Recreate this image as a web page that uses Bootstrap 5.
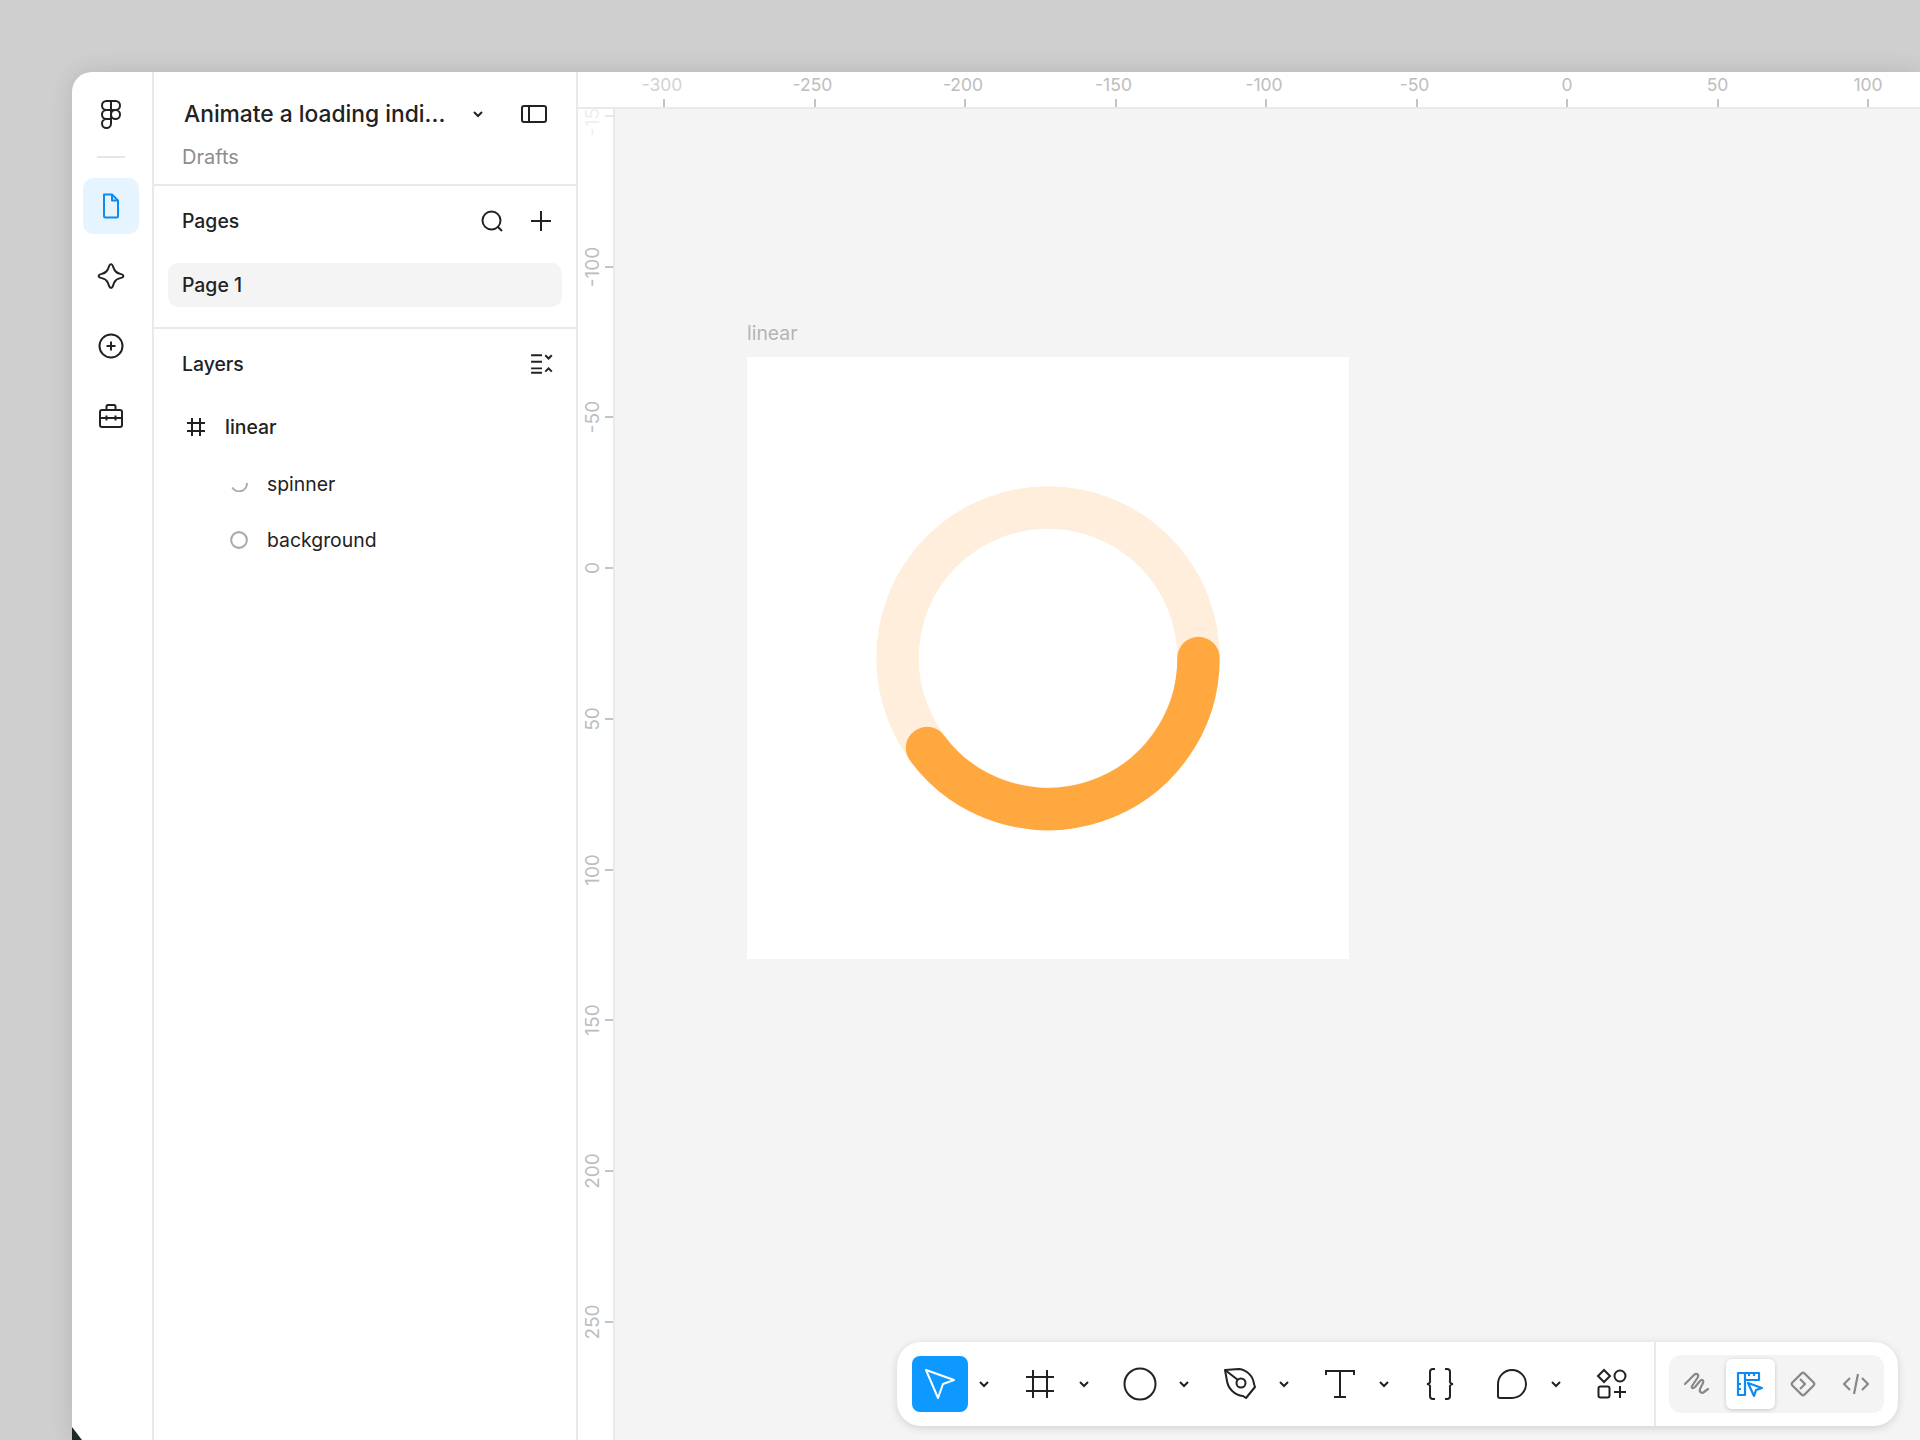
<!DOCTYPE html>
<html>
<head>
  <meta charset="utf-8">
  <title>Animate a loading indicator</title>
  <link href="https://cdn.jsdelivr.net/npm/bootstrap@5.3.0/dist/css/bootstrap.min.css" rel="stylesheet">
  <style>
    html, body { height: 1440px; overflow: hidden; }
    body { background: #cfcfcf; font-family: Inter, "Liberation Sans", sans-serif; color: #222; font-size: 19.4px; padding: 72px 0 0 72px; }
    .app-window { position: relative; width: 1848px; height: 1368px; background: #fff; border-top-left-radius: 20px; box-shadow: 0 0 24px rgba(0,0,0,.12); overflow: hidden; }
    .corner-dark { position: absolute; left: 0; bottom: 0; width: 10px; height: 13px; background: #1d2b22; clip-path: polygon(0 0, 100% 100%, 0 100%); }
    .rail { width: 82px; border-right: 2px solid #e9e9e9; padding: 22px 3px 0 0; }
    .rail-logo { height: 40px; }
    .rail-rule { width: 28px; height: 2px; background: #e6e6e6; margin: 22px 0 20px; }
    .rail-btn { width: 56px; height: 56px; border-radius: 10px; margin-bottom: 14px; }
    .rail-btn.on { background: #e5f4ff; }
    .side { width: 424px; border-right: 2px solid #e9e9e9; }
    .side-head { height: 114px; border-bottom: 2px solid #e9e9e9; padding: 22px 29px 0 28px; }
    .doc-title { font-size: 22.8px; font-weight: 500; line-height: 40px; width: 275px; margin-left: 2px; white-space: nowrap; }
    .doc-sub { color: #8d8d8d; font-size: 20px; line-height: 24px; margin-top: 11px; }
    .sec-title { font-weight: 500; padding: 0 24px 0 28px; height: 30px; }
    .sec-title span { margin-top: 2px; }
    .pages { height: 143px; border-bottom: 2px solid #e9e9e9; padding-top: 20px; }
    .page-row { margin: 27px 14px 0; height: 44px; background: #f4f4f4; border-radius: 10px; font-weight: 500; padding-left: 14px; line-height: 44px; }
    .layers { padding-top: 20px; }
    .layer-row { height: 56.3px; }
    .layer-row span { line-height: 1; margin-top: 2px; }
    .ly-top { padding-left: 33px; margin-top: 20px; font-weight: 500; gap: 20px; }
    .ly-sub { padding-left: 76px; gap: 19px; }
    .canvas { background: #f4f4f4; }
    .ruler-h { position: absolute; left: 506px; top: 0; right: 0; height: 37px; background: #fff; border-bottom: 2px solid #e9e9e9; }
    .ruler-v { position: absolute; left: 506px; top: 0; bottom: 0; width: 37px; background: #fff; border-right: 2px solid #e9e9e9; overflow: hidden; }
    .tick-h { position: absolute; top: 0; width: 2px; height: 35px; }
    .tick-h i { position: absolute; left: 0; bottom: 0; width: 2px; height: 8px; background: #c4c4c4; }
    .tick-h b { position: absolute; top: 3px; left: 1px; transform: translateX(-50%); font-weight: 400; font-size: 17.5px; line-height: 20px; color: #bdbdbd; white-space: nowrap; }
    .tick-h.neg b { left: -1px; }
    .tick-h.faded b { color: #d2d2d2; }
    .tick-v { position: absolute; left: 0; width: 35px; height: 2px; }
    .tick-v i { position: absolute; right: 0; top: 0; height: 2px; width: 8px; background: #c4c4c4; }
    .tick-v b { position: absolute; left: 15px; top: 1px; transform: translate(-50%,-50%) rotate(-90deg); font-weight: 400; font-size: 19px; line-height: 20px; color: #bdbdbd; white-space: nowrap; }
    .tick-v.faded b { color: #efefef; }
    .tick-v.faded i { background: #e8e8e8; }
    .frame-label { position: absolute; left: 675px; top: 249px; line-height: 24px; color: #b5b5b5; }
    .frame-box { position: absolute; left: 675px; top: 285px; width: 602px; height: 602px; background: #fff; }
    .toolbar { position: absolute; left: 825px; top: 1270px; width: 1001px; height: 84px; background: #fff; border-radius: 24px; box-shadow: 0 2px 8px rgba(0,0,0,.14); padding-left: 15px; }
    .tool { width: 56px; height: 56px; border-radius: 8px; }
    .tool.on { background: #0d99ff; }
    .tool-caret { width: 24px; height: 56px; margin-right: 20px; padding-left: 8px; }
    .mode-wrap { position: absolute; left: 757px; top: 0; bottom: 0; border-left: 2px solid #eaeaea; padding: 13px 0 0 13px; }
    .mode-group { width: 215px; height: 58px; background: #f4f4f4; border-radius: 12px; padding: 4px 0 0 4px; }
    .mode-btn { width: 49px; height: 50px; border-radius: 6px; margin-right: 4px; }
    .mode-btn.on { background: #fff; box-shadow: 0 1px 4px rgba(0,0,0,.18); }
  </style>
</head>
<body>
  <div class="app-window d-flex">
    <div class="rail d-flex flex-column align-items-center flex-shrink-0">
      <div class="rail-logo d-flex align-items-center justify-content-center">
        <svg width="22" height="30" viewBox="0 0 22 30" fill="none" stroke="#222" stroke-width="2"><path d="M11 2H6.5a4.500 4.500 0 0 0 0 9H11zM11 2h4.500a4.500 4.500 0 0 1 0 9H11zM11 11H6.500a4.500 4.500 0 0 0 0 9H11zM11 15.500a4.500 4.500 0 1 0 9 0a4.500 4.500 0 1 0-9 0zM11 20H6.500a4.500 4.500 0 1 0 4.500 4.500z"/></svg>
      </div>
      <div class="rail-rule"></div>
      <div class="rail-btn on d-flex align-items-center justify-content-center">
        <svg width="18" height="26" viewBox="0 0 18 26" fill="none" stroke="#0d8bf0" stroke-width="2" stroke-linejoin="round"><path d="M2 1.500h8l6 6v15.500a1.500 1.500 0 0 1-1.500 1.500h-11a1.500 1.500 0 0 1-1.500-1.500z"/><path d="M10 1.500v6h6"/></svg>
      </div>
      <div class="rail-btn d-flex align-items-center justify-content-center">
        <svg width="28" height="28" viewBox="0 0 26 26" fill="none" stroke="#222" stroke-width="1.800" stroke-linejoin="round"><path d="M13 2c1.800 0 2 3 3 5s3 3.500 5.500 4c2.500.5 3 1 3 2s-.5 1.500-3 2s-4.500 2-5.500 4s-1.200 5-3 5s-2-3-3-5s-3-3.500-5.500-4s-3-1-3-2s.5-1.500 3-2s4.500-2 5.500-4s1.200-5 3-5z"/></svg>
      </div>
      <div class="rail-btn d-flex align-items-center justify-content-center">
        <svg width="26" height="26" viewBox="0 0 26 26" fill="none" stroke="#222" stroke-width="2"><circle cx="13" cy="13" r="11.500"/><path d="M13 8.500v9M8.500 13h9"/></svg>
      </div>
      <div class="rail-btn d-flex align-items-center justify-content-center">
        <svg width="26" height="26" viewBox="0 0 26 26" fill="none" stroke="#222" stroke-width="2" stroke-linejoin="round"><rect x="2" y="7" width="22" height="17" rx="2"/><path d="M8.500 7V3.500a1.500 1.500 0 0 1 1.500-1.500h6a1.500 1.500 0 0 1 1.500 1.500V7M2 15h22M8.500 12.500v5M17.500 12.500v5"/></svg>
      </div>
    </div>

    <div class="side flex-shrink-0">
      <div class="side-head">
        <div class="d-flex align-items-center">
          <div class="doc-title">Animate a loading indi...</div>
          <svg style="margin-left:13px" width="12" height="8" viewBox="0 0 12 8" fill="none" stroke="#222" stroke-width="2"><path d="M2 2l4 4 4-4"/></svg>
          <svg class="ms-auto" width="26" height="18" viewBox="0 0 26 18" fill="none" stroke="#222" stroke-width="2"><rect x="1" y="1" width="24" height="16" rx="2"/><path d="M8 1v16"/></svg>
        </div>
        <div class="doc-sub">Drafts</div>
      </div>
      <div class="pages">
        <div class="sec-title d-flex align-items-center">
          <span>Pages</span>
          <svg class="ms-auto" width="24" height="24" viewBox="0 0 24 24" fill="none" stroke="#222" stroke-width="2"><circle cx="11.500" cy="11.500" r="9"/><path d="M18 18l4 4"/></svg>
          <svg style="margin-left:26px" width="22" height="22" viewBox="0 0 22 22" fill="none" stroke="#222" stroke-width="2"><path d="M11 1v20M1 11h20"/></svg>
        </div>
        <div class="page-row">Page 1</div>
      </div>
      <div class="layers">
        <div class="sec-title d-flex align-items-center">
          <span>Layers</span>
          <svg class="ms-auto" style="margin-right:-2px" width="24" height="22" viewBox="0 0 22 20" fill="none" stroke="#222" stroke-width="1.800"><path d="M1 2h10M1 8h10M1 14h10M1 18h10M14 2l3 3 3-3M14 17l3-3 3 3"/></svg>
        </div>
        <div class="layer-row ly-top d-flex align-items-center">
          <svg width="18" height="18" viewBox="0 0 18 18" fill="none" stroke="#222" stroke-width="2"><path d="M5 0v18M13 0v18M0 5h18M0 13h18"/></svg>
          <span>linear</span>
        </div>
        <div class="layer-row ly-sub d-flex align-items-center">
          <svg width="18" height="18" viewBox="0 0 16 16" fill="none" stroke="#aaa" stroke-width="1.800"><path d="M15 8A7 7 0 0 1 2 12"/></svg>
          <span>spinner</span>
        </div>
        <div class="layer-row ly-sub d-flex align-items-center">
          <svg width="18" height="18" viewBox="0 0 16 16" fill="none" stroke="#aaa" stroke-width="1.800"><circle cx="8" cy="8" r="7"/></svg>
          <span>background</span>
        </div>
      </div>
    </div>

    <div class="canvas flex-grow-1"></div>
    <div class="ruler-v" id="rulerV"></div>
    <div class="ruler-h" id="rulerH"></div>

    <div class="frame-label">linear</div>
    <div class="frame-box">
      <svg width="602" height="602" viewBox="0 0 602 602" fill="none" stroke-width="42.400">
        <circle cx="301" cy="301" r="150.500" stroke="#ffeedc"/>
        <path d="M451.500 301A150.500 150.500 0 0 1 180 391" stroke="#ffa83f" stroke-linecap="round"/>
      </svg>
    </div>

    <div class="toolbar d-flex align-items-center">
      <div class="tool on d-flex align-items-center justify-content-center">
        <svg width="34" height="34" viewBox="0 0 34 34" fill="none" stroke="#fff" stroke-width="2" stroke-linejoin="round"><path d="M3 3l28 10-11 4-5 14z"/></svg>
      </div>
      <div class="tool-caret d-flex align-items-center justify-content-center"><svg width="12" height="8" viewBox="0 0 12 8" fill="none" stroke="#222" stroke-width="2"><path d="M2 2l4 4 4-4"/></svg></div>
      <div class="tool d-flex align-items-center justify-content-center">
        <svg width="30" height="30" viewBox="0 0 30 30" fill="none" stroke="#222" stroke-width="2"><path d="M8 1v28M22 1v28M1 8h28M1 22h28"/></svg>
      </div>
      <div class="tool-caret d-flex align-items-center justify-content-center"><svg width="12" height="8" viewBox="0 0 12 8" fill="none" stroke="#222" stroke-width="2"><path d="M2 2l4 4 4-4"/></svg></div>
      <div class="tool d-flex align-items-center justify-content-center">
        <svg width="34" height="34" viewBox="0 0 34 34" fill="none" stroke="#222" stroke-width="2"><circle cx="17" cy="17" r="15.500"/></svg>
      </div>
      <div class="tool-caret d-flex align-items-center justify-content-center"><svg width="12" height="8" viewBox="0 0 12 8" fill="none" stroke="#222" stroke-width="2"><path d="M2 2l4 4 4-4"/></svg></div>
      <div class="tool d-flex align-items-center justify-content-center">
        <svg width="34" height="34" viewBox="0 0 34 34" fill="none" stroke="#222" stroke-width="2" stroke-linejoin="round"><path d="M2 3l14-1c8 1 14 7 15 15l1 3-9 11-3-2C11 28 5 21 4 14z"/><circle cx="18" cy="16" r="4.500"/><path d="M2 3l13 10"/></svg>
      </div>
      <div class="tool-caret d-flex align-items-center justify-content-center"><svg width="12" height="8" viewBox="0 0 12 8" fill="none" stroke="#222" stroke-width="2"><path d="M2 2l4 4 4-4"/></svg></div>
      <div class="tool d-flex align-items-center justify-content-center">
        <svg width="30" height="30" viewBox="0 0 30 30" fill="none" stroke="#222" stroke-width="2"><path d="M1 6V2h28v4M15 2v26M9 28h12"/></svg>
      </div>
      <div class="tool-caret d-flex align-items-center justify-content-center"><svg width="12" height="8" viewBox="0 0 12 8" fill="none" stroke="#222" stroke-width="2"><path d="M2 2l4 4 4-4"/></svg></div>
      <div class="tool d-flex align-items-center justify-content-center">
        <svg width="32" height="34" viewBox="0 0 32 34" fill="none" stroke="#222" stroke-width="2"><path d="M11 2H9a3 3 0 0 0-3 3v8a3 3 0 0 1-3 4a3 3 0 0 1 3 4v8a3 3 0 0 0 3 3h2M21 2h2a3 3 0 0 1 3 3v8a3 3 0 0 0 3 4a3 3 0 0 0-3 4v8a3 3 0 0 1-3 3h-2"/></svg>
      </div>
      <div class="tool d-flex align-items-center justify-content-center" style="margin-left:16px">
        <svg width="32" height="32" viewBox="0 0 32 32" fill="none" stroke="#222" stroke-width="2"><path d="M16 2a14 14 0 0 1 0 28H4a2 2 0 0 1-2-2V16A14 14 0 0 1 16 2z"/></svg>
      </div>
      <div class="tool-caret d-flex align-items-center justify-content-center"><svg width="12" height="8" viewBox="0 0 12 8" fill="none" stroke="#222" stroke-width="2"><path d="M2 2l4 4 4-4"/></svg></div>
      <div class="tool d-flex align-items-center justify-content-center">
        <svg width="32" height="32" viewBox="0 0 32 32" fill="none" stroke="#222" stroke-width="2"><path d="M8 2l6 6-6 6-6-6z"/><circle cx="24" cy="8" r="5.500"/><rect x="2.500" y="18.500" width="11" height="11" rx="2"/><path d="M24 18v12M18 24h12"/></svg>
      </div>
      <div class="mode-wrap">
        <div class="mode-group d-flex">
          <div class="mode-btn d-flex align-items-center justify-content-center"><svg width="28" height="28" viewBox="0 0 28 28" fill="none" stroke="#888" stroke-width="2.200" stroke-linecap="round" stroke-linejoin="round"><path d="M2 14L11 5c2-2 5-1 4 2l-6 9c-1 2 1 3 3 1l5-6c2-2 4-1 3 2l-3 6c-1 3 2 5 4 3l4-3"/></svg></div>
          <div class="mode-btn on d-flex align-items-center justify-content-center"><svg width="28" height="28" viewBox="0 0 28 28" fill="none" stroke="#0d8bf0" stroke-width="2.200" stroke-linejoin="round"><path d="M2 3h21v7H9v15H2zM9 3v7M13 3v3M18 3v3M2 14h3M2 19h3"/><path d="M12 13l14 5-6 2-2 6z"/></svg></div>
          <div class="mode-btn d-flex align-items-center justify-content-center"><svg width="28" height="28" viewBox="0 0 28 28" fill="none" stroke="#888" stroke-width="2.200" stroke-linejoin="round"><rect x="5.500" y="5.500" width="17" height="17" rx="2" transform="rotate(45 14 14)"/><path d="M11 9l5 5-5 5"/></svg></div>
          <div class="mode-btn d-flex align-items-center justify-content-center"><svg width="26" height="22" viewBox="0 0 26 22" fill="none" stroke="#888" stroke-width="2.200"><path d="M7 5l-6 6 6 6M19 5l6 6-6 6M15 1l-4 20"/></svg></div>
        </div>
      </div>
    </div>

    <div class="corner-dark"></div>
  </div>

  <script>
    // rulers: 50 units every 150.5px, 0 sits at x=1494 / y=495 inside the window
    const rulerH = document.getElementById('rulerH');
    for (let v = -300; v <= 100; v += 50) {
      const t = document.createElement('div');
      t.className = 'tick-h' + (v < 0 ? ' neg' : '') + (v === -300 ? ' faded' : '');
      t.style.left = (1494 - 506 + v * 3.01) + 'px';
      t.innerHTML = '<i></i><b>' + v + '</b>';
      rulerH.appendChild(t);
    }
    const rulerV = document.getElementById('rulerV');
    for (let v = -150; v <= 250; v += 50) {
      const t = document.createElement('div');
      t.className = 'tick-v' + (v === -150 ? ' faded' : '');
      t.style.top = (495 + v * 3.015) + 'px';
      t.innerHTML = '<i></i><b>' + v + '</b>';
      rulerV.appendChild(t);
    }
  </script>
  <script src="https://cdn.jsdelivr.net/npm/bootstrap@5.3.0/dist/js/bootstrap.bundle.min.js"></script>
</body>
</html>
